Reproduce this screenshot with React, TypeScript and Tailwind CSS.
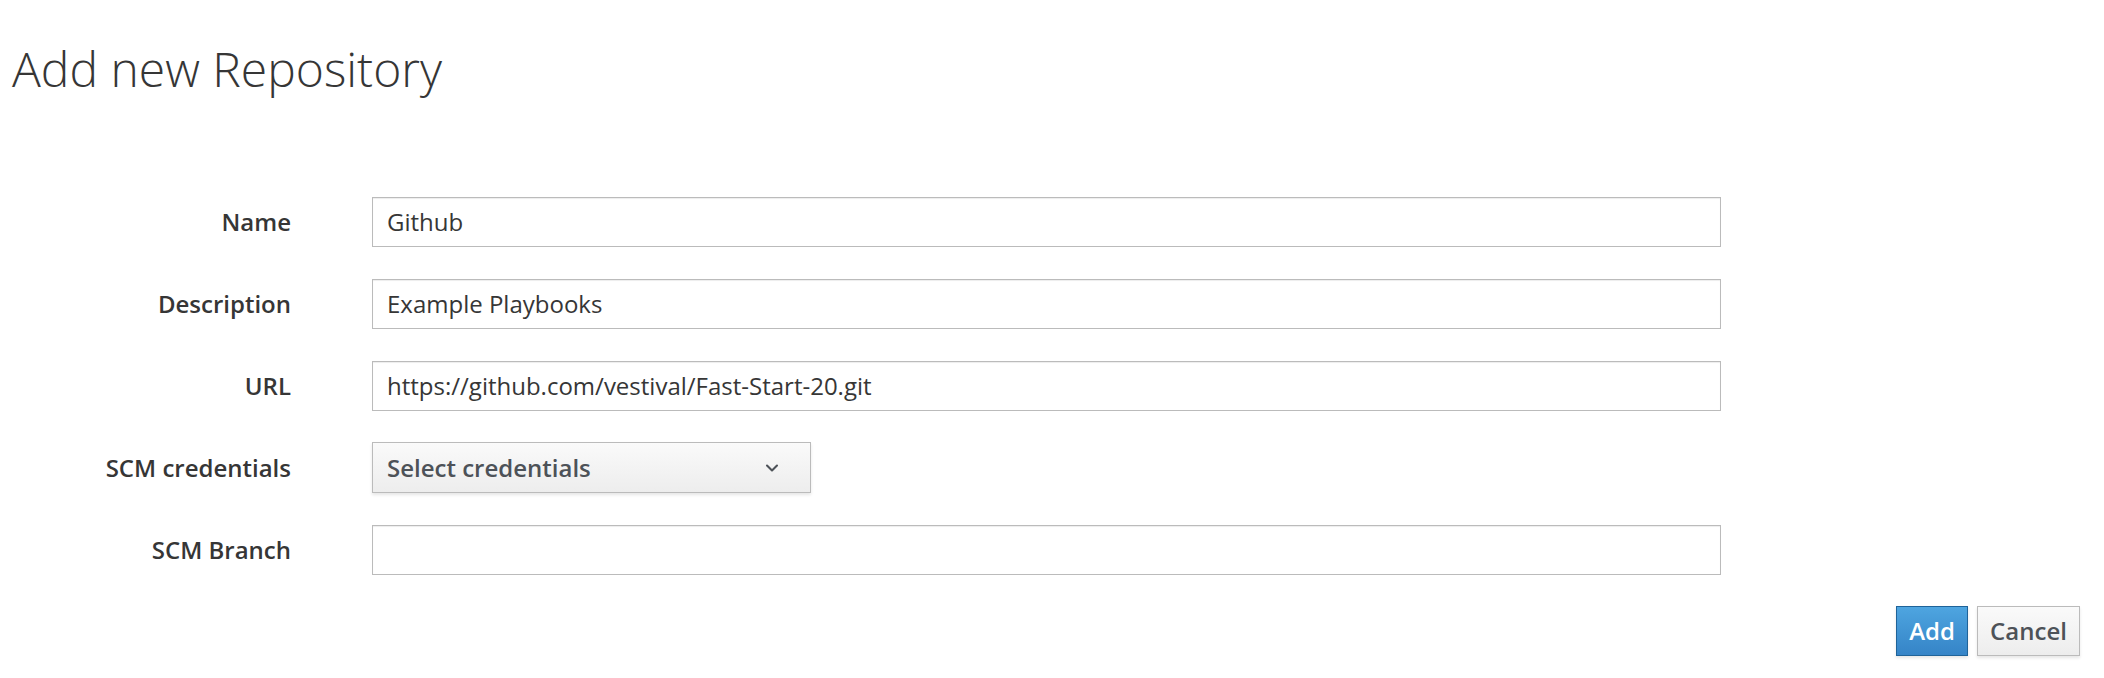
import { ChevronDown } from 'lucide-react';

const fields = [
  { label: 'Name', value: 'Github' },
  { label: 'Description', value: 'Example Playbooks' },
  { label: 'URL', value: 'https://github.com/vestival/Fast-Start-20.git' },
];

function TextField({ label, value }: { label: string; value: string }) {
  return (
    <div className="flex items-center">
      <label className="w-[291px] text-right text-[24px] font-semibold text-[#363636]">{label}</label>
      <div className="ml-[81px] flex h-[50px] w-[1349px] items-center border border-[#bbbbbb] bg-white px-[14px] text-[24px] text-[#363636] shadow-[inset_0_1px_1px_rgba(3,3,3,0.075)]">
        {value}
      </div>
    </div>
  );
}

export default function App() {
  return (
    <div className="min-h-[678px] bg-white font-['Open_Sans',sans-serif] text-[#363636]">
      <h1 className="pl-[12px] pt-[36px] text-[48px] font-light leading-[66px] text-[#363636]">
        Add new Repository
      </h1>

      <form className="mt-[95px] flex flex-col gap-[31.75px]">
        {fields.map((f) => (
          <TextField key={f.label} label={f.label} value={f.value} />
        ))}

        <div className="flex items-center">
          <label className="w-[291px] text-right text-[24px] font-semibold text-[#363636]">SCM credentials</label>
          <button
            type="button"
            className="ml-[81px] flex h-[51px] w-[439px] items-center justify-between border border-[#bbbbbb] bg-gradient-to-b from-[#fafafa] to-[#ededed] pl-[14px] pr-[28px] text-[24px] font-semibold text-[#4d5258] shadow-[0_2px_3px_rgba(3,3,3,0.1)]"
          >
            <span>Select credentials</span>
            <ChevronDown size={20} strokeWidth={2.5} className="text-[#4d5258]" />
          </button>
        </div>

        <TextField label="SCM Branch" value="" />
      </form>

      <div className="mr-[24px] mt-[31px] flex justify-end gap-[9px]">
        <button
          type="button"
          className="h-[50px] w-[72px] border border-[#1f6399] bg-gradient-to-b from-[#4ea5e0] to-[#3584c7] text-[24px] font-semibold text-white shadow-[0_2px_3px_rgba(3,3,3,0.1)]"
        >
          Add
        </button>
        <button
          type="button"
          className="h-[50px] w-[103px] border border-[#bbbbbb] bg-gradient-to-b from-[#fafafa] to-[#ededed] text-[24px] font-semibold text-[#4d5258] shadow-[0_2px_3px_rgba(3,3,3,0.1)]"
        >
          Cancel
        </button>
      </div>
    </div>
  );
}
